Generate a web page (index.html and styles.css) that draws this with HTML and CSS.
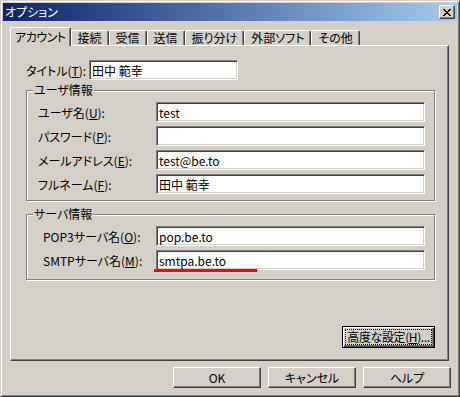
FILE: index.html
```html
<!DOCTYPE html>
<html lang="ja">
<head>
<meta charset="UTF-8">
<title>オプション</title>
<link rel="stylesheet" href="styles.css">
</head>
<body>
<div class="window">
    <div class="titlebar">
        <span class="title">オプション</span>
        <button class="close" type="button">
            <svg width="8" height="7" viewBox="0 0 8 7" shape-rendering="crispEdges"><path d="M0 0h2v1H0zM6 0h2v1H6zM1 1h2v1H1zM5 1h2v1H5zM2 2h4v1H2zM3 3h2v1H3zM2 4h4v1H2zM1 5h2v1H1zM5 5h2v1H5zM0 6h2v1H0zM6 6h2v1H6z"/></svg>
        </button>
    </div>

    <div class="tabs">
        <div class="tab active">アカウント</div>
        <div class="tab">接続</div>
        <div class="tab">受信</div>
        <div class="tab">送信</div>
        <div class="tab">振り分け</div>
        <div class="tab">外部ソフト</div>
        <div class="tab">その他</div>
    </div>

    <div class="panel">
        <div class="row title-row">
            <label>タイトル(<u>T</u>):</label>
            <input class="field" type="text" value="田中 範幸">
        </div>

        <div class="group">
            <span class="legend">ユーザ情報</span>
            <div class="row">
                <label>ユーザ名(<u>U</u>):</label>
                <input class="field" type="text" value="test">
            </div>
            <div class="row">
                <label>パスワード(<u>P</u>):</label>
                <input class="field" type="password" value="">
            </div>
            <div class="row">
                <label>メールアドレス(<u>E</u>):</label>
                <input class="field" type="text" value="test@be.to">
            </div>
            <div class="row">
                <label>フルネーム(<u>F</u>):</label>
                <input class="field" type="text" value="田中 範幸">
            </div>
        </div>

        <div class="group server">
            <span class="legend">サーバ情報</span>
            <div class="row">
                <label>POP3サーバ名(<u>O</u>):</label>
                <input class="field" type="text" value="pop.be.to">
            </div>
            <div class="row">
                <label>SMTPサーバ名(<u>M</u>):</label>
                <span class="wrap">
                    <input class="field" type="text" value="smtpa.be.to">
                    <span class="mark"></span>
                </span>
            </div>
        </div>

        <div class="actions">
            <button class="btn default" type="button"><span class="focus">高度な設定(<u>H</u>)...</span></button>
        </div>
    </div>

    <div class="footer">
        <button class="btn" type="button">OK</button>
        <button class="btn" type="button">キャンセル</button>
        <button class="btn" type="button">ヘルプ</button>
    </div>
</div>
</body>
</html>
```

FILE: styles.css
```css
body {
    margin: 0;
    background-color: #d4d0c8;
    font-family: "Noto Sans CJK JP", "Liberation Sans", sans-serif;
    font-size: 12px;
    font-feature-settings: "palt";
    color: #000;
}
u {
    text-decoration: underline;
}
.window {
    width: 460px;
    height: 397px;
    box-sizing: border-box;
    background-color: #d4d0c8;
    border: 1px solid;
    border-color: #d4d0c8 #404040 #404040 #d4d0c8;
    box-shadow: inset 1px 1px #fff, inset -1px -1px #808080;
    padding: 2px;
}
.titlebar {
    height: 18px;
    display: flex;
    align-items: center;
    justify-content: space-between;
    padding: 0 2px;
    background: linear-gradient(to right, #0a246a, #a6caf0);
    color: #fff;
}
.title {
    line-height: 18px;
}
.close {
    width: 16px;
    height: 14px;
    box-sizing: border-box;
    padding: 0;
    display: flex;
    align-items: center;
    justify-content: center;
    background-color: #d4d0c8;
    border: 1px solid;
    border-color: #fff #404040 #404040 #fff;
    box-shadow: inset -1px -1px #808080;
}
.tabs {
    display: flex;
    align-items: flex-end;
    height: 18px;
    margin-top: 6px;
    padding-left: 7px;
}
.tab {
    height: 15px;
    box-sizing: border-box;
    padding: 0 6px;
    border: 1px solid #fff;
    border-bottom: 0;
    border-right-color: #404040;
    box-shadow: inset -1px 0 #808080;
    border-radius: 2px 2px 0 0;
    line-height: 14px;
    white-space: nowrap;
}
.tab.active {
    height: 19px;
    margin-bottom: -1px;
    position: relative;
    background-color: #d4d0c8;
    padding: 1px 4px 0;
    line-height: 16px;
    letter-spacing: -0.5px;
}
.panel {
    width: 439px;
    height: 316px;
    box-sizing: border-box;
    margin-left: 7px;
    border: 1px solid;
    border-color: #fff #404040 #404040 #fff;
    box-shadow: inset -1px -1px #808080;
    padding: 14px 13px 12px 15px;
    display: flex;
    flex-direction: column;
}
.row {
    display: grid;
    grid-template-columns: 118px 1fr;
    align-items: center;
    height: 20px;
}
.title-row {
    grid-template-columns: 63px 149px;
}
.field {
    width: 100%;
    height: 20px;
    box-sizing: border-box;
    margin: 0;
    border: 1px solid;
    border-color: #808080 #fff #fff #808080;
    box-shadow: inset 1px 1px #404040, inset -1px -1px #d4d0c8;
    background-color: #fff;
    padding: 0 2px;
    font: inherit;
    color: #000;
    outline: none;
}
.group {
    position: relative;
    margin-top: 10px;
    padding: 11px 9px 6px 11px;
    border: 1px solid #808080;
    box-shadow: inset 1px 1px #fff, 1px 1px #fff;
    display: flex;
    flex-direction: column;
    gap: 4px;
}
.group.server {
    margin-top: 13px;
    padding-bottom: 9px;
}
.group.server label {
    padding-left: 5px;
}
.legend {
    position: absolute;
    top: -7px;
    left: 6px;
    padding: 0 1px;
    background-color: #d4d0c8;
    line-height: 12px;
}
.wrap {
    display: block;
    position: relative;
}
.mark {
    position: absolute;
    left: -2px;
    top: 19px;
    width: 103px;
    height: 3px;
    background-color: #f00;
}
.actions {
    margin-top: auto;
    display: flex;
    justify-content: flex-end;
}
.btn {
    width: 88px;
    height: 21px;
    box-sizing: border-box;
    padding: 0;
    font: inherit;
    color: #000;
    background-color: #d4d0c8;
    border: 1px solid;
    border-color: #fff #404040 #404040 #fff;
    box-shadow: inset -1px -1px #808080;
    white-space: nowrap;
}
.btn.default {
    width: 93px;
    height: 22px;
    padding: 2px;
    border: 1px solid #000;
    box-shadow: inset 1px 1px #fff, inset -1px -1px #404040, inset -2px -2px #808080;
}
.focus {
    display: block;
    height: 100%;
    box-sizing: border-box;
    border: 1px dotted #000;
    line-height: 14px;
    letter-spacing: -0.4px;
    overflow: hidden;
}
.footer {
    display: flex;
    justify-content: flex-end;
    gap: 7px;
    margin-top: 6px;
    padding-right: 6px;
}
```
